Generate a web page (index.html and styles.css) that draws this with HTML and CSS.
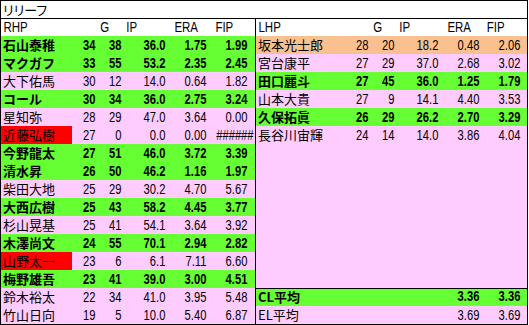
FILE: index.html
```html
<!DOCTYPE html>
<html lang="ja">
<head>
<meta charset="utf-8">
<link rel="stylesheet" href="styles.css">
</head>
<body>
<div class="sheet">
  <div class="title">リリーフ</div>
  <div class="body">
    <div class="side left">
      <div class="row head"><span class="nm">RHP</span><span></span><span class="h hg">G</span><span class="h hip">IP</span><span class="h hera">ERA</span><span class="h hfip">FIP</span></div>
      <div class="row g"><span class="nm">石山泰稚</span><span class="n">34</span><span class="n">38</span><span class="n">36.0</span><span class="n">1.75</span><span class="n">1.99</span></div>
      <div class="row g"><span class="nm">マクガフ</span><span class="n">33</span><span class="n">55</span><span class="n">53.2</span><span class="n">2.35</span><span class="n">2.45</span></div>
      <div class="row p"><span class="nm">大下佑馬</span><span class="n">30</span><span class="n">12</span><span class="n">14.0</span><span class="n">0.64</span><span class="n">1.82</span></div>
      <div class="row g"><span class="nm">コール</span><span class="n">30</span><span class="n">34</span><span class="n">36.0</span><span class="n">2.75</span><span class="n">3.24</span></div>
      <div class="row p"><span class="nm">星知弥</span><span class="n">28</span><span class="n">29</span><span class="n">47.0</span><span class="n">3.64</span><span class="n">0.00</span></div>
      <div class="row p"><span class="nm red">近藤弘樹</span><span class="n">27</span><span class="n">0</span><span class="n">0.0</span><span class="n">0.00</span><span class="n">######</span></div>
      <div class="row g"><span class="nm">今野龍太</span><span class="n">27</span><span class="n">51</span><span class="n">46.0</span><span class="n">3.72</span><span class="n">3.39</span></div>
      <div class="row g"><span class="nm">清水昇</span><span class="n">26</span><span class="n">50</span><span class="n">46.2</span><span class="n">1.16</span><span class="n">1.97</span></div>
      <div class="row p"><span class="nm">柴田大地</span><span class="n">25</span><span class="n">29</span><span class="n">30.2</span><span class="n">4.70</span><span class="n">5.67</span></div>
      <div class="row g"><span class="nm">大西広樹</span><span class="n">25</span><span class="n">43</span><span class="n">58.2</span><span class="n">4.45</span><span class="n">3.77</span></div>
      <div class="row p"><span class="nm">杉山晃基</span><span class="n">25</span><span class="n">41</span><span class="n">54.1</span><span class="n">3.64</span><span class="n">3.92</span></div>
      <div class="row g"><span class="nm">木澤尚文</span><span class="n">24</span><span class="n">55</span><span class="n">70.1</span><span class="n">2.94</span><span class="n">2.82</span></div>
      <div class="row p"><span class="nm red">山野太一</span><span class="n">23</span><span class="n">6</span><span class="n">6.1</span><span class="n">7.11</span><span class="n">6.60</span></div>
      <div class="row g"><span class="nm">梅野雄吾</span><span class="n">23</span><span class="n">41</span><span class="n">39.0</span><span class="n">3.00</span><span class="n">4.51</span></div>
      <div class="row p"><span class="nm">鈴木裕太</span><span class="n">22</span><span class="n">34</span><span class="n">41.0</span><span class="n">3.95</span><span class="n">5.48</span></div>
      <div class="row p"><span class="nm">竹山日向</span><span class="n">19</span><span class="n">5</span><span class="n">10.0</span><span class="n">5.40</span><span class="n">6.87</span></div>
    </div>
    <div class="side right">
      <div class="row head"><span class="nm">LHP</span><span></span><span class="h hg">G</span><span class="h hip">IP</span><span class="h hera">ERA</span><span class="h hfipr">FIP</span></div>
      <div class="row o"><span class="nm">坂本光士郎</span><span class="n">28</span><span class="n">20</span><span class="n">18.2</span><span class="n">0.48</span><span class="n">2.06</span></div>
      <div class="row p"><span class="nm">宮台康平</span><span class="n">27</span><span class="n">29</span><span class="n">37.0</span><span class="n">2.68</span><span class="n">3.02</span></div>
      <div class="row g"><span class="nm">田口麗斗</span><span class="n">27</span><span class="n">45</span><span class="n">36.0</span><span class="n">1.25</span><span class="n">1.79</span></div>
      <div class="row p"><span class="nm">山本大貴</span><span class="n">27</span><span class="n">9</span><span class="n">14.1</span><span class="n">4.40</span><span class="n">3.53</span></div>
      <div class="row g"><span class="nm">久保拓眞</span><span class="n">26</span><span class="n">29</span><span class="n">26.2</span><span class="n">2.70</span><span class="n">3.29</span></div>
      <div class="row p"><span class="nm">長谷川宙輝</span><span class="n">24</span><span class="n">14</span><span class="n">14.0</span><span class="n">3.86</span><span class="n">4.04</span></div>
      <div class="fill"></div>
      <div class="row g avg"><span class="nm">CL平均</span><span></span><span></span><span></span><span class="n">3.36</span><span class="n">3.36</span></div>
      <div class="row p"><span class="nm">EL平均</span><span></span><span></span><span></span><span class="n">3.69</span><span class="n">3.69</span></div>
    </div>
  </div>
</div>
</body>
</html>
```

FILE: styles.css
```css
html, body {
  margin: 0;
  background: #fff;
}
.sheet {
  width: 526px;
  height: 323px;
  border: 1px solid #000;
  display: flex;
  flex-direction: column;
  color: #000;
  font-family: "Noto Sans CJK JP", sans-serif;
  font-size: 13px;
}
.title {
  height: 17px;
  line-height: 17px;
  border-bottom: 1px solid #000;
  padding-left: 2px;
  font-feature-settings: "palt";
}
.body {
  flex: 1;
  display: flex;
}
.side {
  display: flex;
  flex-direction: column;
  overflow: hidden;
}
.left {
  width: 254px;
  border-right: 1px solid #000;
}
.right {
  width: 271px;
  background: #ffccff;
}
.row {
  display: grid;
  height: 18px;
  line-height: 18px;
  white-space: nowrap;
  overflow: hidden;
}
.left .row {
  grid-template-columns: 71px 25px 26px 44px 41px 41px 6px;
}
.right .row {
  grid-template-columns: 89px 25px 26px 44px 41px 41px 5px;
}
.row.head {
  height: 17px;
  line-height: 17px;
  background: #fff;
}
.head .nm,
.h {
  font-family: "Liberation Sans", sans-serif;
  font-size: 14px;
  transform: scaleX(0.82);
  transform-origin: left center;
}
.head .nm {
  padding-left: 3px;
}
.nm {
  padding-left: 2px;
}
.h {
  padding-left: 4px;
}
.hera {
  padding-left: 9px;
}
.hfip {
  padding-left: 9px;
}
.hfipr {
  padding-left: 7px;
}
.n {
  text-align: right;
  padding-right: 2px;
  font-family: "Liberation Sans", sans-serif;
  font-size: 14px;
  transform: scaleX(0.8);
  transform-origin: right center;
}
.g {
  background: #66ff33;
  font-weight: 700;
}
.g .n {
  font-weight: 700;
}
.p {
  background: #ffccff;
}
.o {
  background: #fac090;
}
.red {
  background: #ff0000;
}
.fill {
  flex: 1;
}
.avg {
  height: 17px;
  line-height: 15px;
  border-top: 1px solid #000;
}
```
